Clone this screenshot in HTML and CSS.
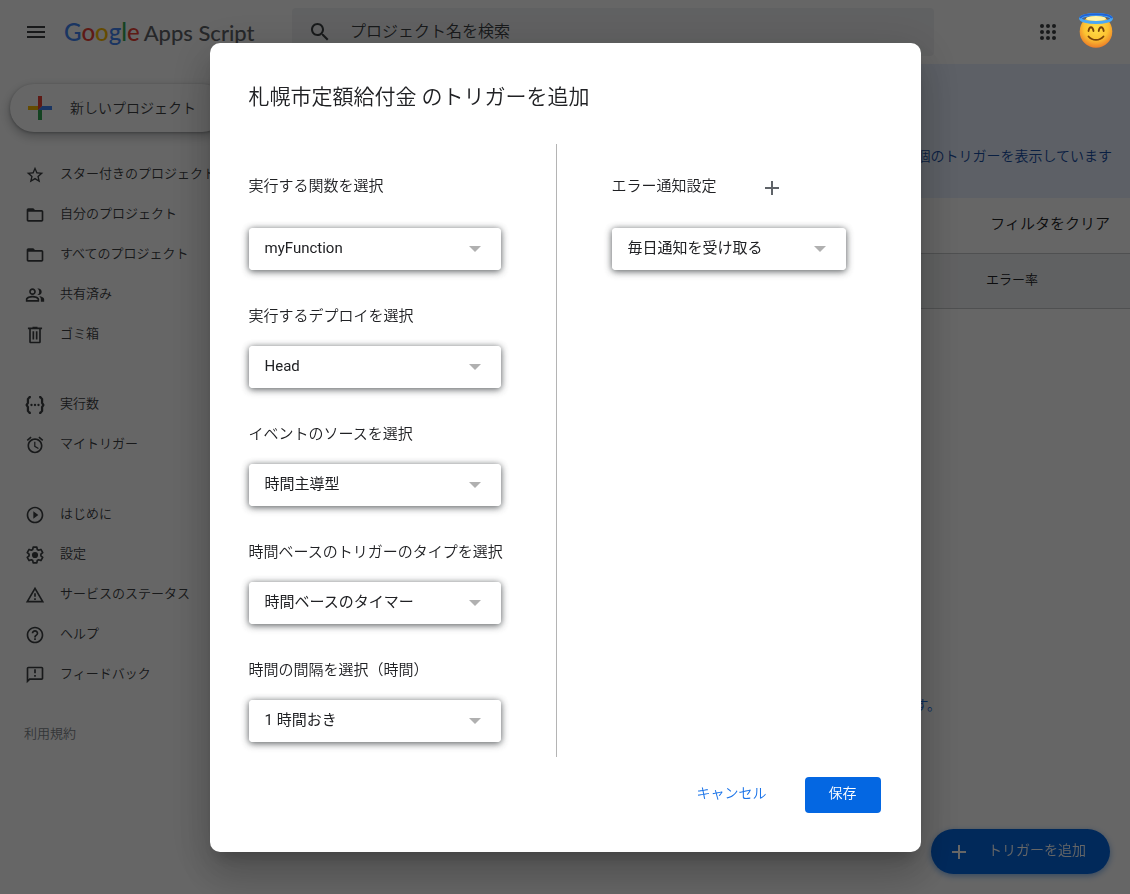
FILE: index.html
```html
<!DOCTYPE html>
<html lang="ja">

<head>
    <meta charset="UTF-8">
    <meta name="viewport" content="width=device-width, initial-scale=1.0">
    <title>Google Apps Script</title>
    <link rel="stylesheet" href="styles.css">
</head>

<body>
    <header class="topbar">
        <button class="icon-btn menu-btn" type="button" aria-label="メニュー">
            <svg width="24" height="24" viewBox="0 0 24 24"><path d="M3 18h18v-2H3v2zm0-5h18v-2H3v2zm0-7v2h18V6H3z"/></svg>
        </button>
        <a class="logo" href="#"><span class="logo-google"><span class="blue">G</span><span class="red">o</span><span class="yellow">o</span><span class="blue">g</span><span class="green">l</span><span class="red">e</span></span><span>Apps Script</span></a>
        <label class="search">
            <svg width="24" height="24" viewBox="0 0 24 24"><path d="M15.5 14h-.79l-.28-.27C15.41 12.59 16 11.11 16 9.5 16 5.91 13.09 3 9.5 3S3 5.91 3 9.5 5.91 16 9.5 16c1.61 0 3.09-.59 4.23-1.57l.27.28v.79l5 4.99L20.49 19l-4.99-5zm-6 0C7.01 14 5 11.99 5 9.5S7.01 5 9.5 5 14 7.01 14 9.5 11.99 14 9.5 14z"/></svg>
            <input type="text" placeholder="プロジェクト名を検索" aria-label="プロジェクト名を検索">
        </label>
        <button class="icon-btn apps-btn" type="button" aria-label="アプリ">
            <svg width="24" height="24" viewBox="0 0 24 24"><circle cx="6" cy="6" r="2"/><circle cx="12" cy="6" r="2"/><circle cx="18" cy="6" r="2"/><circle cx="6" cy="12" r="2"/><circle cx="12" cy="12" r="2"/><circle cx="18" cy="12" r="2"/><circle cx="6" cy="18" r="2"/><circle cx="12" cy="18" r="2"/><circle cx="18" cy="18" r="2"/></svg>
        </button>
        <svg class="avatar" width="36" height="36" viewBox="0 0 36 36" role="img" aria-label="アカウント">
            <defs>
                <radialGradient id="face" cx="50%" cy="38%" r="62%">
                    <stop offset="0" stop-color="#ffe04a"/>
                    <stop offset="0.6" stop-color="#fcc332"/>
                    <stop offset="1" stop-color="#ec7d28"/>
                </radialGradient>
            </defs>
            <ellipse cx="18" cy="5.500" rx="15" ry="4" fill="none" stroke="#1f5fd0" stroke-width="2.500"/>
            <circle cx="18" cy="18.500" r="16.300" fill="url(#face)"/>
            <ellipse cx="18" cy="5.500" rx="10" ry="2.500" fill="#fff3a8"/>
            <ellipse cx="18" cy="5.500" rx="15.500" ry="4" fill="none" stroke="#4aa8f5" stroke-width="2.800"/>
            <path d="M2 5C5 0 31 0 34 5" fill="none" stroke="#1f62d6" stroke-width="2"/>
            <path d="M10.500 18c.8-5 4.200-5 5 0M20.700 18c.8-5 4.200-5 5 0M10.500 23.500c4 4.600 11 4.600 15 0" fill="none" stroke="#7a4308" stroke-width="1.800" stroke-linecap="round"/>
        </svg>
    </header>

    <div class="layout">
        <nav class="sidebar">
            <button class="new-project" type="button">
                <svg width="24" height="24" viewBox="0 0 24 24"><path fill="#ea4335" d="M10 0h4v10l-4 4z"/><path fill="#fbbc04" d="M0 10h10v4H0z"/><path fill="#34a853" d="M10 14l4-1v11h-4z"/><path fill="#4285f4" d="M14 10h10v4H10z"/><path fill="#ea4335" d="M10 10h4l-4 4z"/></svg>
                新しいプロジェクト
            </button>
            <ul>
                <li><a href="#"><svg viewBox="0 0 24 24"><path d="M22 9.240l-7.190-.62L12 2 9.190 8.630 2 9.240l5.460 4.730L5.820 21 12 17.270 18.180 21l-1.630-7.030L22 9.240zM12 15.400l-3.760 2.270 1-4.280-3.320-2.880 4.380-.38L12 6.100l1.710 4.040 4.380.38-3.320 2.880 1 4.280L12 15.400z"/></svg>スター付きのプロジェクト</a></li>
                <li><a href="#"><svg viewBox="0 0 24 24"><path d="M20 6h-8l-2-2H4c-1.100 0-2 .9-2 2v12c0 1.100.9 2 2 2h16c1.100 0 2-.9 2-2V8c0-1.100-.9-2-2-2zm0 12H4V8h16v10z"/></svg>自分のプロジェクト</a></li>
                <li><a href="#"><svg viewBox="0 0 24 24"><path d="M20 6h-8l-2-2H4c-1.100 0-2 .9-2 2v12c0 1.100.9 2 2 2h16c1.100 0 2-.9 2-2V8c0-1.100-.9-2-2-2zm0 12H4V8h16v10z"/></svg>すべてのプロジェクト</a></li>
                <li><a href="#"><svg viewBox="0 0 24 24"><path d="M9 12c2.210 0 4-1.790 4-4s-1.790-4-4-4-4 1.790-4 4 1.790 4 4 4zm0-6c1.100 0 2 .9 2 2s-.9 2-2 2-2-.9-2-2 .9-2 2-2zm0 7c-2.670 0-8 1.340-8 4v3h16v-3c0-2.660-5.330-4-8-4zm6 5H3v-.99C3.200 16.290 6.300 15 9 15s5.800 1.290 6 2v1zm-.5-6.100c2-.5 2.500-2.200 2.500-3.900s-.9-3.300-2.500-3.900c.5-.1 5.500-.4 5.500 3.900 0 4.200-4.500 4.200-5.500 3.900zM17 13.300c3 .6 6 1.800 6 3.700v3h-4v-3c0-1.500-.8-2.700-2-3.700z"/></svg>共有済み</a></li>
                <li><a href="#"><svg viewBox="0 0 24 24"><path d="M15 3V2H9v1H3.500v2H5v15c0 1.100.9 2 2 2h10c1.100 0 2-.9 2-2V5h1.500V3H15zm2 17H7V5h10v15zM9 7.500h2v10H9zm4 0h2v10h-2z"/></svg>ゴミ箱</a></li>
            </ul>
            <ul>
                <li><a href="#"><svg viewBox="0 0 24 24"><path d="M7 2.500H5.500L3.500 5v4.500L2 12l1.500 2.500V19l2 2.500H7M17 2.500h1.500l2 2.500v4.500L22 12l-1.500 2.500V19l-2 2.500H17" fill="none" stroke="#3c4043" stroke-width="2.700"/><circle cx="7.800" cy="12" r="1.400"/><circle cx="12" cy="12" r="1.400"/><circle cx="16.200" cy="12" r="1.400"/></svg>実行数</a></li>
                <li><a href="#"><svg viewBox="0 0 24 24"><path d="M12.500 8H11v6l4.750 2.850.75-1.230-4-2.370V8zm4.837-6.190l4.607 3.845-1.280 1.535-4.610-3.843 1.282-1.537zm-10.674 0l1.282 1.536L3.337 7.190l-1.280-1.536L6.663 1.810zM12 4c-4.970 0-9 4.030-9 9s4.030 9 9 9 9-4.030 9-9-4.030-9-9-9zm0 16c-3.860 0-7-3.140-7-7s3.140-7 7-7 7 3.140 7 7-3.140 7-7 7z"/></svg>マイトリガー</a></li>
            </ul>
            <ul>
                <li><a href="#"><svg viewBox="0 0 24 24"><path d="M10 16.500l6-4.500-6-4.500v9zM12 2C6.480 2 2 6.480 2 12s4.480 10 10 10 10-4.480 10-10S17.520 2 12 2zm0 18c-4.410 0-8-3.590-8-8s3.590-8 8-8 8 3.590 8 8-3.590 8-8 8z"/></svg>はじめに</a></li>
                <li><a href="#"><svg viewBox="0 0 24 24"><path d="M9.800 2.500h4.400l.5 2.800 1.700 1 2.700-1 2.200 3.800-2.200 1.800v2.200l2.200 1.800-2.200 3.800-2.700-1-1.700 1-.5 2.800H9.800l-.5-2.800-1.700-1-2.700 1-2.200-3.800 2.200-1.800v-2.200L2.700 9.100l2.200-3.800 2.700 1 1.700-1z" fill="none" stroke="#3c4043" stroke-width="2" stroke-linejoin="round"/><circle cx="12" cy="12" r="3.700"/></svg>設定</a></li>
                <li><a href="#"><svg viewBox="0 0 24 24"><path d="M12 5.990L19.530 19H4.470L12 5.990M12 2L1 21h22L12 2zm1 14h-2v2h2v-2zm0-6h-2v4h2v-4z"/></svg>サービスのステータス</a></li>
                <li><a href="#"><svg viewBox="0 0 24 24"><path d="M11 18h2v-2h-2v2zm1-16C6.480 2 2 6.480 2 12s4.480 10 10 10 10-4.480 10-10S17.520 2 12 2zm0 18c-4.410 0-8-3.590-8-8s3.590-8 8-8 8 3.590 8 8-3.590 8-8 8zm0-14c-2.210 0-4 1.790-4 4h2c0-1.100.9-2 2-2s2 .9 2 2c0 2-3 1.750-3 5h2c0-2.250 3-2.500 3-5 0-2.210-1.790-4-4-4z"/></svg>ヘルプ</a></li>
                <li><a href="#"><svg viewBox="0 0 24 24"><path d="M20 2H4c-1.100 0-1.990.9-1.990 2L2 22l4-4h14c1.100 0 2-.9 2-2V4c0-1.100-.9-2-2-2zm0 14H5.170L4 17.170V4h16v12zM11 5h2v5h-2zm0 7h2v2h-2z"/></svg>フィードバック</a></li>
            </ul>
            <a class="terms" href="#">利用規約</a>
        </nav>

        <main class="content">
            <div class="banner">1 個のトリガーを表示しています</div>
            <div class="filters"><button type="button">フィルタをクリア</button></div>
            <table class="triggers">
                <thead>
                    <tr>
                        <th>オーナー</th>
                        <th>前回の実行</th>
                        <th>デプロイ</th>
                        <th>イベント</th>
                        <th class="func">関数</th>
                        <th class="rate">エラー率</th>
                    </tr>
                </thead>
            </table>
            <p class="empty">条件に一致するトリガーはありません。<a href="#">新しいトリガーをここで作成します。</a></p>
        </main>
    </div>

    <button class="fab" type="button">
        <svg width="14" height="14" viewBox="0 0 14 14"><path d="M6 0h2v6h6v2H8v6H6V8H0V6h6z"/></svg>
        <span>トリガーを追加</span>
    </button>

    <div class="scrim">
        <form class="dialog" role="dialog" aria-labelledby="dialog-title">
            <h1 id="dialog-title">札幌市定額給付金 のトリガーを追加</h1>
            <div class="columns">
                <div class="col col-main">
                    <div class="field field-first">
                        <label for="func">実行する関数を選択</label>
                        <div class="select"><select id="func"><option>myFunction</option></select></div>
                    </div>
                    <div class="field">
                        <label for="deploy">実行するデプロイを選択</label>
                        <div class="select"><select id="deploy"><option>Head</option></select></div>
                    </div>
                    <div class="field">
                        <label for="source">イベントのソースを選択</label>
                        <div class="select"><select id="source"><option>時間主導型</option></select></div>
                    </div>
                    <div class="field">
                        <label for="type">時間ベースのトリガーのタイプを選択</label>
                        <div class="select"><select id="type"><option>時間ベースのタイマー</option></select></div>
                    </div>
                    <div class="field">
                        <label for="interval">時間の間隔を選択（時間）</label>
                        <div class="select"><select id="interval"><option>1 時間おき</option></select></div>
                    </div>
                </div>
                <div class="col col-notify">
                    <div class="field field-first">
                        <div class="label-row">
                            <label for="notify">エラー通知設定</label>
                            <button class="add-btn" type="button" aria-label="通知を追加">
                                <svg width="14" height="14" viewBox="0 0 14 14"><path d="M6 0h2v6h6v2H8v6H6V8H0V6h6z"/></svg>
                            </button>
                        </div>
                        <div class="select"><select id="notify"><option>毎日通知を受け取る</option></select></div>
                    </div>
                </div>
            </div>
            <div class="actions">
                <button class="cancel" type="button">キャンセル</button>
                <button class="save" type="submit">保存</button>
            </div>
        </form>
    </div>
</body>

</html>
```

FILE: styles.css
```css
:root {
    --text: #202124;
    --muted: #5f6368;
    --icon: #3c4043;
    --blue: #0467e2;
    --line: #c6c8ca;
}

* {
    box-sizing: border-box;
    margin: 0;
    padding: 0;
}

body {
    min-height: 100vh;
    overflow: hidden;
    font-family: Roboto, "Noto Sans CJK JP", sans-serif;
    font-size: 14px;
    font-weight: 350;
    line-height: 20px;
    color: var(--text);
    background-color: white;
}

button,
input,
select {
    font: inherit;
    color: inherit;
    border: none;
    background: none;
}

button {
    cursor: pointer;
}

a {
    color: inherit;
    text-decoration: none;
}

svg {
    display: block;
    flex: none;
    fill: var(--icon);
}

/* Top bar */
.topbar {
    display: flex;
    align-items: center;
    height: 64px;
    padding: 0 16px 0 24px;
}

.logo {
    display: flex;
    align-items: baseline;
    gap: 4px;
    flex: none;
    width: 228px;
    margin-left: 16px;
    font-family: Lato, sans-serif;
    font-size: 22px;
    font-weight: 500;
    line-height: 28px;
    color: var(--muted);
}

.logo-google {
    font-size: 24px;
}

.blue {
    color: #4285f4;
}

.red {
    color: #ea4335;
}

.yellow {
    color: #fbbc04;
}

.green {
    color: #34a853;
}

.search {
    display: flex;
    align-items: center;
    gap: 18px;
    flex: 1;
    height: 48px;
    padding: 0 16px;
    border-radius: 4px;
    background-color: #f1f3f4;
}

.search input {
    flex: 1;
    font-size: 16px;
    outline: none;
}

.search input::placeholder {
    color: var(--icon);
    opacity: 1;
}

.apps-btn {
    margin-left: 102px;
}

/* The avatar stays visible over the scrim */
.avatar {
    position: relative;
    z-index: 3;
    margin: 0 0 2px 18px;
}

/* Sidebar */
.layout {
    display: flex;
}

.sidebar {
    flex: none;
    width: 256px;
    padding-top: 20px;
    font-size: 13px;
    color: var(--icon);
}

.new-project {
    display: flex;
    align-items: center;
    gap: 18px;
    height: 48px;
    margin: 0 0 22px 10px;
    padding: 0 30px 0 18px;
    border-radius: 24px;
    font-size: 14px;
    background-color: white;
    box-shadow: 0 1px 3px rgba(60, 64, 67, 0.4), 0 4px 8px 2px rgba(60, 64, 67, 0.25);
}

.sidebar ul {
    list-style: none;
    margin-bottom: 30px;
}

.sidebar li a {
    display: flex;
    align-items: center;
    gap: 15px;
    height: 40px;
    padding-left: 25px;
}

.sidebar li svg {
    width: 20px;
    height: 20px;
    margin-top: 2px;
}

.terms {
    display: block;
    padding-left: 24px;
    color: #80868b;
}

/* Content */
.content {
    flex: 1;
    min-width: 0;
}

.banner {
    height: 134px;
    padding: 82px 18px 0 0;
    text-align: right;
    color: #174ea6;
    background-color: #e8f0fe;
}

.filters {
    display: flex;
    justify-content: flex-end;
    align-items: center;
    height: 55px;
    padding: 0 20px 3px 0;
    font-size: 15px;
}

.triggers {
    width: 100%;
    border-collapse: collapse;
    font-size: 13px;
}

.triggers th {
    height: 55px;
    padding: 0 0 2px 24px;
    border-top: 1px solid var(--line);
    border-bottom: 1px solid var(--line);
    text-align: left;
    font-weight: 350;
    background-color: #f1f3f4;
}

.triggers .func {
    width: 180px;
}

.triggers .rate {
    width: 144px;
    padding-left: 0;
}

.empty {
    padding: 386px 0 0 8px;
    text-align: center;
}

.empty a {
    color: #1a73e8;
}

.fab {
    position: fixed;
    right: 20px;
    bottom: 20px;
    display: flex;
    align-items: center;
    gap: 22px;
    height: 45px;
    padding: 0 24px 0 21px;
    border-radius: 24px;
    color: white;
    background-color: var(--blue);
    box-shadow: 0 2px 6px rgba(4, 103, 226, 0.5);
}

.fab svg {
    fill: white;
}

.fab span {
    padding-bottom: 3px;
}

/* Dialog */
.scrim {
    position: fixed;
    inset: 0;
    z-index: 2;
    display: flex;
    align-items: center;
    justify-content: center;
    background-color: rgba(0, 0, 0, 0.6);
}

.dialog {
    width: 90%;
    max-width: 711px;
    padding: 40px 40px 39px 39px;
    border-radius: 10px;
    background-color: white;
    box-shadow: 0 11px 15px -7px rgba(0, 0, 0, 0.2), 0 24px 38px 3px rgba(0, 0, 0, 0.14), 0 9px 46px 8px rgba(0, 0, 0, 0.12);
}

.dialog h1 {
    margin-bottom: 33px;
    font-size: 21px;
    font-weight: 350;
    line-height: 28px;
}

.columns {
    display: flex;
    font-size: 15px;
}

.col {
    display: flex;
    flex-direction: column;
    gap: 36px;
    padding: 32px 0 15px;
}

.col-main {
    flex: 0 0 308px;
    border-right: 1px solid #b4b4b4;
}

.col-main .select {
    width: 252px;
}

.col-notify {
    padding-left: 55px;
}

.col-notify .select {
    width: 234px;
}

.field label {
    display: block;
}

.field .select {
    margin-top: 20px;
}

.field-first .select {
    margin-top: 32px;
}

.label-row {
    display: flex;
    align-items: center;
    gap: 48px;
    height: 20px;
}

.add-btn svg {
    margin-top: 4px;
    fill: var(--muted);
}

.select {
    position: relative;
    border-radius: 4px;
    box-shadow: 0 1px 6px rgba(60, 64, 67, 0.7), 0 2px 8px rgba(60, 64, 67, 0.3);
}

.select::after {
    content: "";
    position: absolute;
    top: 18px;
    right: 20px;
    border: 6px solid transparent;
    border-top-color: #b0b0b0;
    border-bottom: none;
    pointer-events: none;
}

.select select {
    display: block;
    appearance: none;
    width: 100%;
    height: 42px;
    padding: 0 16px 2px;
    border-radius: 4px;
    font-family: Roboto, "Noto Sans CJK JP", sans-serif;
    font-weight: 400;
    background-color: white;
}

.actions {
    display: flex;
    justify-content: flex-end;
    gap: 14px;
    margin-top: 20px;
}

.actions button {
    height: 36px;
    padding: 0 24px 3px;
    border-radius: 4px;
}

.cancel {
    color: #1a73e8;
}

.save {
    color: white;
    background-color: var(--blue);
}
```
